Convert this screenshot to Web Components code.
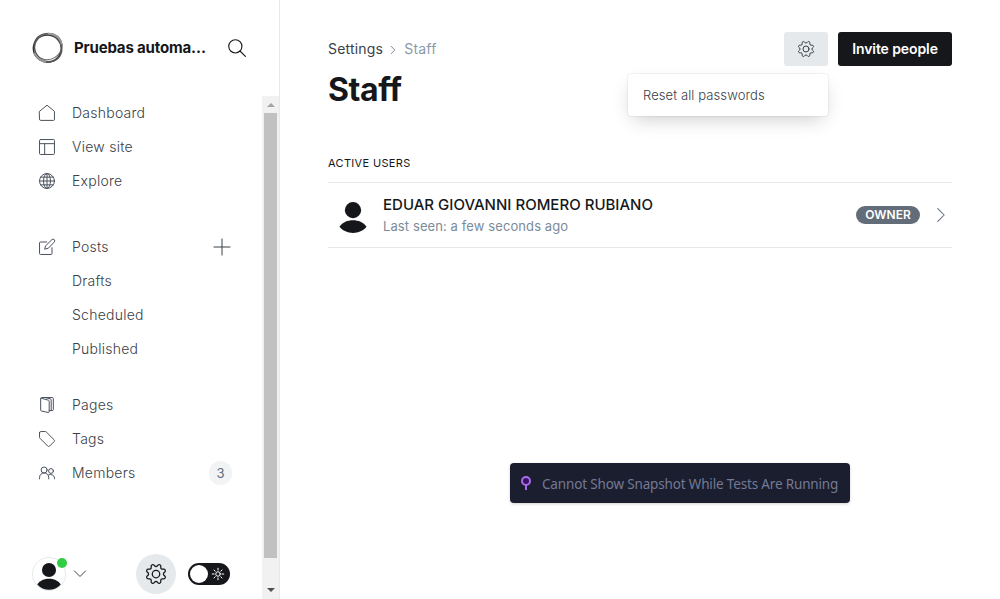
<!DOCTYPE html>
<html lang="en">
<head>
<meta charset="utf-8">
<title>Staff</title>
<style>
html,body{margin:0;height:100%;overflow:hidden;background:#fff}
body{font-family:Inter,"Liberation Sans",sans-serif;color:#15171a;font-size:14px}
</style>
</head>
<body>
<admin-app></admin-app>
<script>
const gear = 'M10.546,2.438a1.957,1.957,0,0,0,2.908,0L14.4,1.4a1.959,1.959,0,0,1,3.41,1.413l-.071,1.4A1.958,1.958,0,0,0,19.79,6.266l1.4-.071A1.959,1.959,0,0,1,22.6,9.6l-1.042.94a1.96,1.96,0,0,0,0,2.909l1.042.94a1.959,1.959,0,0,1-1.413,3.41l-1.4-.071a1.958,1.958,0,0,0-2.056,2.056l.071,1.4A1.959,1.959,0,0,1,14.4,22.6l-.941-1.041a1.959,1.959,0,0,0-2.908,0L9.606,22.6A1.959,1.959,0,0,1,6.2,21.192l.072-1.4a1.958,1.958,0,0,0-2.056-2.056l-1.4.071A1.958,1.958,0,0,1,1.4,14.4l1.041-.94a1.96,1.96,0,0,0,0-2.909L1.4,9.606A1.958,1.958,0,0,1,2.809,6.2l1.4.071A1.958,1.958,0,0,0,6.264,4.211L6.192,2.81A1.959,1.959,0,0,1,9.606,1.4Z';
const icons = {
  home: '<path d="M.8 9.500 12 .3l11.2 9.2v12a1.6 1.6 0 0 1-1.6 1.6H2.4a1.6 1.6 0 0 1-1.6-1.6z"/>',
  layout: '<rect x=".8" y=".8" width="22.4" height="22.4" rx="1.4"/><path d="M.8 7h22.4M8.500 7v16"/>',
  globe: '<circle cx="12" cy="12" r="11.2"/><ellipse cx="12" cy="12" rx="5.2" ry="11.2"/><path d="M.8 12h22.4M2.6 6.2h18.8M2.6 17.8h18.8M12 .8v22.4"/>',
  edit: '<path d="M11.500 4.500H2.2A1.4 1.4 0 0 0 .8 5.900v15.800a1.500 1.500 0 0 0 1.500 1.500h15.700a1.500 1.500 0 0 0 1.500-1.500V13"/><path d="m13.500 14-5 1.300 1.300-5L19.400 1a2.400 2.400 0 0 1 3.500 3.500z"/>',
  pages: '<path d="M2.500 2.200v17.300c0 .8.500 1.300 1.200 1.500l10 2.200c.9.200 1.600-.3 1.600-1.200V6.300c0-.8-.4-1.300-1.200-1.500L4 2"/><path d="M2.500 2.200C2.500 1.200 3.200.8 4 .8h15.800a1.700 1.700 0 0 1 1.700 1.700v16.200a1.700 1.700 0 0 1-1.700 1.700h-4.500M10 1l7 1.800c1 .2 1.300.8 1.300 1.700v15.500"/>',
  tag: '<path d="M.8 2.600v6.700c0 .7.300 1.300.8 1.800l11.500 11.500a2 2 0 0 0 2.800 0l6.700-6.700a2 2 0 0 0 0-2.800L11.100 1.600A2.600 2.600 0 0 0 9.300.8H2.600A1.800 1.800 0 0 0 .8 2.600z"/>',
  members: '<circle cx="7.700" cy="7.500" r="4.500"/><path d="M.8 20.800v-2a6.900 6.900 0 0 1 13.800 0v2"/><circle cx="18" cy="9" r="3.600"/><path d="M14.300 14.800a6 6 0 0 1 9 5v1"/>',
  gear: `<circle cx="12" cy="12" r="4.500"/><path d="${gear}"/>`,
  search: '<circle cx="9.800" cy="9.800" r="8.800"/><path d="m16 16 7.200 7.200"/>',
  plus: '<path d="M12 0v24M0 12h24"/>',
  down: '<path d="m1 6 11 11L23 6"/>',
  right: '<path d="m6.500 1 11 11-11 11"/>',
  sun: '<circle cx="12" cy="12" r="4.500"/><path d="M12 .5v3.800M12 19.700v3.800M.5 12h3.800M19.700 12h3.800M3.900 3.900l2.600 2.600M17.500 17.500l2.600 2.600M20.100 3.900l-2.600 2.600M3.900 20.100l2.600-2.600"/>',
  person: '<g fill="currentColor" stroke="none"><circle cx="12" cy="6.500" r="6.500"/><path d="M1.200 19.800C3.600 16.200 7.800 14.600 12 14.600s8.400 1.600 10.800 5.200C20.200 23 16.200 24.700 12 24.700S3.800 23 1.200 19.800z"/></g>'
};

const define = (name, template) => customElements.define(name, class extends HTMLElement {
  connectedCallback() {
    if (this.shadowRoot) return;
    const html = typeof template === 'function' ? template(this) : template;
    this.attachShadow({ mode: 'open' }).innerHTML = html;
  }
});

define('ui-icon', el => `<style>
:host{display:block;flex:none;width:16px;height:16px}
svg{display:block;width:100%;height:100%;overflow:visible}
</style><svg viewBox="0 0 24 24" fill="none" stroke="currentColor" stroke-width="${el.getAttribute('weight') || 1.5}" stroke-linecap="round" stroke-linejoin="round">${icons[el.getAttribute('name')]}</svg>`);

define('nav-item', el => `<style>
:host{display:flex;align-items:center;height:34px;padding:0 48px 0 39px;color:#394047;font-size:14px;font-weight:300;letter-spacing:.25px}
.lead{width:33px;flex:none}
ui-icon{color:#4a525b}
.label{flex:1;line-height:17px;padding-bottom:1px}
</style><span class="lead">${el.getAttribute('icon') ? `<ui-icon name="${el.getAttribute('icon')}"></ui-icon>` : ''}</span><span class="label"><slot></slot></span><slot name="end"></slot>`);

define('nav-group', `<style>:host{display:block;margin-bottom:32px}:host([tight]){margin-bottom:22px}</style><slot></slot>`);

define('scroll-bar', `<style>
:host{display:flex;flex-direction:column;align-items:center;width:17px;flex:none;background:#f1f1f1}
.arrow{height:17px;display:flex;align-items:center}
.arrow:before{content:"";border:4px solid transparent;border-top:0;border-bottom:4px solid #a3a3a3}
.arrow.down{height:19px}
.arrow.down:before{border-bottom:0;border-top:4px solid #505050}
.thumb{width:13px;height:445px;background:#c1c1c1}
.fill{flex:1}
</style><div class="arrow"></div><div class="thumb"></div><div class="fill"></div><div class="arrow down"></div>`);

define('site-header', `<style>
:host{display:flex;align-items:center;height:96px;box-sizing:border-box;padding-left:32px}
.logo{width:32px;height:32px;flex:none;overflow:visible}
strong{margin-left:10px;width:135px;white-space:nowrap;overflow:hidden;text-overflow:ellipsis;font-weight:700;font-size:15px;line-height:18px;padding-bottom:1px;letter-spacing:-.17px}
ui-icon{margin-left:19px;width:18px;height:18px}
</style><svg class="logo" viewBox="0 0 32 32" fill="none" stroke="#333">
<circle cx="15.900" cy="15.900" r="14" stroke="#aaa" stroke-width="2.200"/>
<ellipse cx="15.300" cy="16.600" rx="14" ry="13.500" stroke-width="1.300"/>
<ellipse cx="17" cy="15" rx="14" ry="12.600" transform="rotate(-32 16 16)" stroke="#666" stroke-width="1"/>
<ellipse cx="15.800" cy="16" rx="14.700" ry="12.800" transform="rotate(52 16 16)" stroke="#555" stroke-width="1.100"/>
<path d="M16 1.700c7 .1 12.800 4.200 13.400 10.500M2.200 21c2.500 5 7 8.400 12 8.800" stroke="#999" stroke-width="1.800"/>
</svg><strong><slot></slot></strong><ui-icon name="search"></ui-icon>`);

define('side-footer', `<style>
:host{display:flex;align-items:center;height:50px;padding-left:32px}
.avatar{position:relative;width:32px;height:32px;border:1px solid #e6e9eb;border-radius:50%;display:flex;justify-content:center}
.avatar ui-icon{width:26px;height:26px;margin-top:5px}
.dot{position:absolute;right:-2px;top:0;width:10px;height:10px;border-radius:50%;background:#30cf43}
.chev{width:12px;height:12px;margin-left:8px;color:#394047}
.settings{margin-left:50px;width:40px;height:40px;border-radius:50%;background:#e6e9eb;display:grid;place-items:center}
.settings ui-icon{width:20px;height:20px}
.switch{margin-left:12px;width:42px;height:22px;box-sizing:border-box;border-radius:11px;background:#15171a;display:flex;align-items:center;padding:0 6px 0 2px;justify-content:space-between;color:#fff}
.knob{width:18px;height:18px;border-radius:50%;background:#fff}
.switch ui-icon{width:12px;height:12px}
</style><div class="avatar"><ui-icon name="person"></ui-icon><span class="dot"></span></div>
<ui-icon class="chev" name="down" weight="2"></ui-icon>
<div class="settings"><ui-icon name="gear"></ui-icon></div>
<div class="switch"><span class="knob"></span><ui-icon name="sun" weight="2"></ui-icon></div>`);

define('side-bar', `<style>
:host{display:flex;flex-direction:column;width:279px;height:599px;flex:none;border-right:1px solid #e6e9eb}
.body{flex:1;display:flex;min-height:0}
.col{flex:1;display:flex;flex-direction:column}
nav{flex:1}
.plus{width:16px;height:16px;margin-right:-16px;color:#394047}
.count{box-sizing:border-box;width:23px;height:24px;border-radius:12px;margin-right:-18px;background:#f1f3f4;color:#626d79;font-size:13px;font-weight:400;line-height:24px;text-align:center;letter-spacing:0}
</style><site-header>Pruebas automatizadas</site-header>
<div class="body"><div class="col"><nav>
<nav-group><nav-item icon="home">Dashboard</nav-item><nav-item icon="layout">View site</nav-item><nav-item icon="globe">Explore</nav-item></nav-group>
<nav-group tight><nav-item icon="edit">Posts<ui-icon class="plus" slot="end" name="plus"></ui-icon></nav-item><nav-item>Drafts</nav-item><nav-item>Scheduled</nav-item><nav-item>Published</nav-item></nav-group>
<nav-group><nav-item icon="pages">Pages</nav-item><nav-item icon="tag">Tags</nav-item><nav-item icon="members">Members<span class="count" slot="end">3</span></nav-item></nav-group>
</nav><side-footer></side-footer></div><scroll-bar></scroll-bar></div>`);

define('page-header', `<style>
:host{display:flex;justify-content:space-between;height:78px}
.crumbs{display:flex;align-items:center;height:17px;margin-top:8px;font-size:14px;color:#394047;letter-spacing:.2px}
.crumbs ui-icon{width:8px;height:8px;margin:2px 7px 0 6px;color:#7c8b9a}
.current{color:#8b9aa9}
h1{margin:11px 0 0;font-size:32px;line-height:44px;font-weight:700;letter-spacing:-.4px}
.actions{position:relative;display:flex;gap:10px;align-items:flex-start}
.gear{width:44px;height:34px;border-radius:3px;background:#e6e9eb;display:grid;place-items:center;color:#394047}
.invite{width:114px;height:34px;border-radius:3px;background:#15171a;color:#fff;font-size:14px;line-height:34px;text-align:center;font-weight:600;letter-spacing:-.1px}
.menu{position:absolute;right:124px;top:42px;width:200px;height:42px;box-sizing:border-box;padding-left:15px;border-radius:3px;background:#fff;color:#394047;font-size:13px;font-weight:300;line-height:43px;letter-spacing:.1px;box-shadow:0 0 0 1px rgba(0,0,0,.045),0 7px 20px -5px rgba(0,0,0,.22)}
</style><div><div class="crumbs"><span>Settings</span><ui-icon name="right" weight="3"></ui-icon><span class="current">Staff</span></div><h1><slot></slot></h1></div>
<div class="actions"><div class="gear"><ui-icon name="gear"></ui-icon></div><div class="invite">Invite people</div><div class="menu">Reset all passwords</div></div>`);

define('user-row', `<style>
:host{display:flex;align-items:center;height:64px;border:1px solid #e6e9eb;border-width:1px 0}
.face{width:30px;height:30px;margin:4px 15px 0 10px}
.text{flex:1}
.name{font-size:15px;line-height:20px;font-weight:500;letter-spacing:.01px}
.seen{font-size:13px;line-height:18px;margin:2px 0 1px;color:#7c8b9a;font-weight:400;letter-spacing:.1px}
.role{width:64px;height:18px;border-radius:9px;background:#626d79;color:#fff;font-size:12px;line-height:18px;text-align:center;font-weight:600}
.go{width:14px;height:14px;margin:0 4px 0 14px;color:#626d79}
</style><ui-icon class="face" name="person"></ui-icon><div class="text"><div class="name"><slot></slot></div><div class="seen"><slot name="seen"></slot></div></div><div class="role">OWNER</div><ui-icon class="go" name="right" weight="1.8"></ui-icon>`);

define('test-toast', `<style>
:host{position:absolute;left:510px;top:463px;width:340px;height:40px;box-sizing:border-box;border-radius:4px;background:#1b1e2e;display:flex;align-items:center;padding-left:10px;color:#747994;font:400 13.500px "Noto Sans","Open Sans",sans-serif;box-shadow:0 1px 3px rgba(0,0,0,.18);white-space:nowrap}
svg{width:12px;height:14px;margin-right:10px;flex:none}
span{letter-spacing:-.16px;padding-top:2px}
</style><svg viewBox="0 0 12 14"><path d="M6 9v5" stroke="#a66eed" stroke-width="2"/><circle cx="6" cy="5" r="4" fill="#3c1165" stroke="#a66eed" stroke-width="2"/></svg><span><slot></slot></span>`);

define('admin-app', `<style>
:host{display:flex;position:relative;width:1000px;height:599px;background:#fff}
main{flex:1;padding:32px 48px 0;box-sizing:border-box}
.section{margin:45px 0 11px;font-size:11px;line-height:16px;letter-spacing:.33px}
</style><side-bar></side-bar><main><page-header>Staff</page-header><div class="section">ACTIVE USERS</div>
<user-row>EDUAR GIOVANNI ROMERO RUBIANO<span slot="seen">Last seen: a few seconds ago</span></user-row></main>
<test-toast>Cannot Show Snapshot While Tests Are Running</test-toast>`);
</script>
</body>
</html>
